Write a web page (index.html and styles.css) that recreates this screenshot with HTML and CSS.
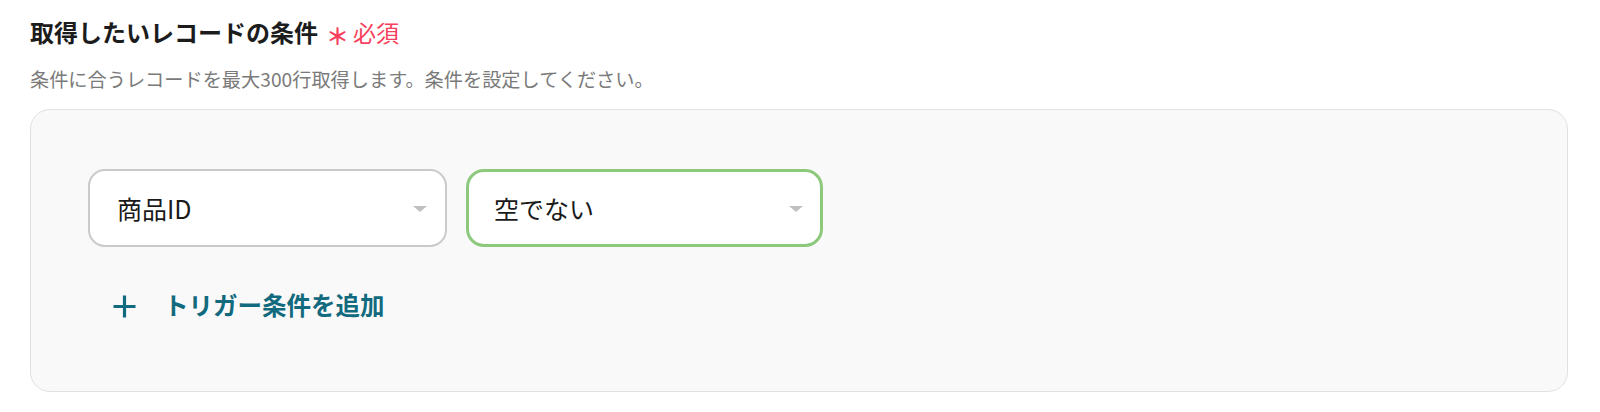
FILE: index.html
```html
<!DOCTYPE html>
<html lang="ja">
<head>
<meta charset="utf-8">
<title>取得したいレコードの条件</title>
<link rel="stylesheet" href="styles.css">
</head>
<body>
<div class="page">
  <div class="field-head">
    <h2 class="title">取得したいレコードの条件</h2>
    <span class="req"><span class="req-mark">＊</span>必須</span>
  </div>
  <p class="desc">条件に合うレコードを最大300行取得します。条件を設定してください。</p>
  <div class="panel">
    <div class="cond-row">
      <div class="select">
        <span class="select-text">商品ID</span>
        <span class="caret"></span>
      </div>
      <div class="select select-active">
        <span class="select-text">空でない</span>
        <span class="caret"></span>
      </div>
    </div>
    <div class="add-btn">
      <svg class="plus" width="25" height="25" viewBox="0 0 25 25" aria-hidden="true">
        <path d="M12.5 1.5v22M1.5 12.5h22" stroke="currentColor" stroke-width="3.2" fill="none" stroke-linecap="butt"/>
      </svg>
      <span class="add-text">トリガー条件を追加</span>
    </div>
  </div>
</div>
</body>
</html>
```

FILE: styles.css
```css
* {
  box-sizing: border-box;
}

html, body {
  margin: 0;
  padding: 0;
  background: #ffffff;
}

body {
  font-family: "Noto Sans CJK JP", "Noto Sans", sans-serif;
  color: #1f1f1f;
}

.page {
  padding: 14px 32px 0 30px;
}

.field-head {
  display: flex;
  align-items: center;
  height: 36px;
}

.title {
  margin: 0;
  font-size: 24px;
  line-height: 36px;
  font-weight: 700;
  color: #1c1c1c;
}

.req {
  display: flex;
  align-items: center;
  margin-left: 8px;
  font-size: 23px;
  line-height: 36px;
  color: #f7405d;
  font-weight: 400;
}

.req-mark {
  font-size: 23px;
  font-weight: 700;
  position: relative;
  top: 3px;
  margin-right: 4px;
}

.desc {
  margin: 15px 0 0 0;
  font-size: 19.2px;
  line-height: 28px;
  color: #7a7a7a;
}

.panel {
  margin-top: 16px;
  background: #f9f9fa;
  border: 1px solid #dfe1e6;
  border-radius: 20px;
  padding: 59px 57px 68px 57px;
}

.cond-row {
  display: flex;
  gap: 19px;
}

.select {
  width: 359px;
  height: 78px;
  background: #ffffff;
  border: 2px solid #cacaca;
  border-radius: 17px;
  display: flex;
  align-items: center;
  justify-content: space-between;
  padding: 0 18px 0 27px;
}

.select-active {
  width: 357px;
  border: 3px solid #8cc97c;
  border-radius: 18px;
  padding: 0 17px 0 25px;
}

.select-text {
  font-size: 25px;
  line-height: 36px;
  color: #1a1a1a;
}

.caret {
  width: 0;
  height: 0;
  border-left: 7.5px solid transparent;
  border-right: 7.5px solid transparent;
  border-top: 6px solid #c0c0c0;
  margin-top: 2px;
}

.add-btn {
  display: flex;
  align-items: center;
  margin-top: 40px;
  margin-left: 24px;
  height: 36px;
  color: #126a7e;
}

.plus {
  display: block;
  margin-top: 3px;
}

.add-text {
  margin-left: 27px;
  font-size: 24.5px;
  line-height: 36px;
  font-weight: 700;
  color: #126a7e;
}
```
